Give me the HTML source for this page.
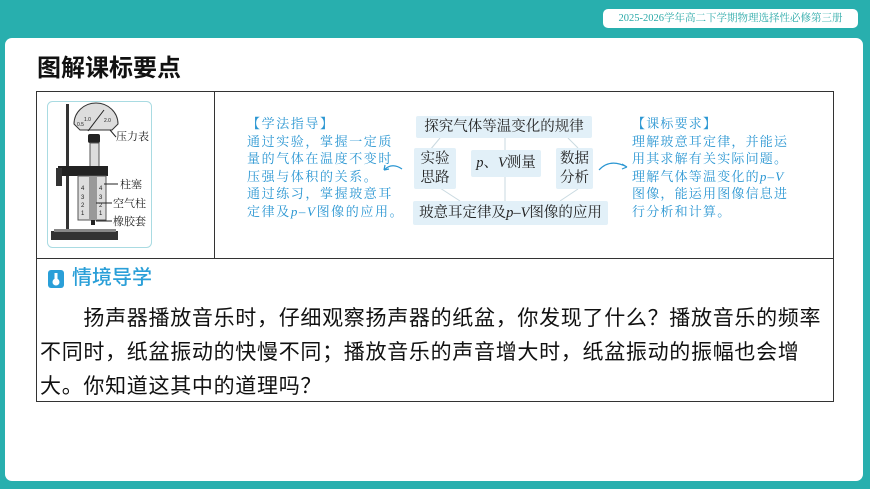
<!DOCTYPE html>
<html><head><meta charset="utf-8"><style>
*{margin:0;padding:0;box-sizing:border-box}
body{width:870px;height:489px;background:#28afae;position:relative;overflow:hidden;font-family:"Liberation Sans","Noto Sans CJK SC",sans-serif}
.badge{position:absolute;left:603px;top:9px;width:255px;height:19px;background:#fff;border-radius:5px;color:#2aa9a8;font-size:10.5px;line-height:19px;text-align:center;font-family:"Liberation Serif","Noto Serif CJK SC",serif}
.card{position:absolute;left:5px;top:38px;width:858px;height:443px;background:#fff;border-radius:7px}
.title{position:absolute;left:37px;top:54px;font-size:24px;font-weight:bold;color:#111;line-height:30px}
.tbl{position:absolute;left:36px;top:91px;width:798px;height:311px;border:1px solid #333}
.vl{position:absolute;left:214px;top:91px;width:1px;height:168px;background:#333}
.hl{position:absolute;left:36px;top:258px;width:798px;height:1px;background:#333}
.blue{position:absolute;color:#2a96d2;font-size:13px;line-height:17.5px;font-family:"Liberation Serif","Noto Serif CJK SC",serif;letter-spacing:1.6px;white-space:nowrap}
.bx{position:absolute;background:#e2f0f8;color:#222;font-family:"Liberation Serif","Noto Serif CJK SC",serif;font-size:14.5px;text-align:center;border-radius:2px;white-space:nowrap}
.sec{position:absolute;left:72px;top:265px;font-size:20px;color:#2a9fd8;line-height:26px;font-weight:500}
.body{position:absolute;left:40px;top:302px;font-size:21px;line-height:34px;color:#111;letter-spacing:0.7px;white-space:nowrap}
</style></head><body>
<div class="badge">2025-2026学年高二下学期物理选择性必修第三册</div>
<div class="card"></div>
<div class="title">图解课标要点</div>
<div class="tbl"></div>
<div class="vl"></div>
<div class="hl"></div>
<svg style="position:absolute;left:0;top:0" width="870" height="489">
<rect x="47.5" y="101.5" width="104" height="146" rx="5" fill="#fff" stroke="#a9dbe2"/>
<rect x="66" y="104" width="3" height="135" fill="#333"/>
<rect x="51" y="231" width="67" height="9" fill="#333"/>
<rect x="54" y="229" width="62" height="3" fill="#888"/>
<path d="M74 124 A22 21 0 0 1 118 124 L112 130 L80 130 Z" fill="#ddd" stroke="#333"/>
<line x1="88" y1="131" x2="104" y2="110" stroke="#222"/>
<text x="84" y="121" font-size="5" fill="#222">1.0</text>
<text x="104" y="122" font-size="5" fill="#222">2.0</text>
<text x="77" y="126" font-size="5" fill="#222">0.5</text>
<line x1="110" y1="130" x2="116" y2="137" stroke="#222"/>
<rect x="88" y="134" width="12" height="9" rx="2" fill="#222"/>
<rect x="90" y="143" width="9" height="24" fill="#ddd" stroke="#555"/>
<rect x="58" y="166" width="50" height="10" fill="#222"/>
<rect x="56" y="168" width="6" height="10" fill="#333"/>
<rect x="56" y="178" width="6" height="8" fill="#333"/>
<rect x="78" y="176" width="28" height="44" fill="#ddd" stroke="#555"/>
<rect x="89" y="176" width="8" height="44" fill="#999"/>
<text x="81" y="190" font-size="6" fill="#222">4</text><text x="81" y="199" font-size="6" fill="#222">3</text><text x="81" y="207" font-size="6" fill="#222">2</text><text x="81" y="215" font-size="6" fill="#222">1</text>
<text x="99" y="190" font-size="6" fill="#222">4</text><text x="99" y="199" font-size="6" fill="#222">3</text><text x="99" y="207" font-size="6" fill="#222">2</text><text x="99" y="215" font-size="6" fill="#222">1</text>
<rect x="91" y="220" width="4" height="5" fill="#222"/>
<line x1="104" y1="184" x2="118" y2="184" stroke="#222"/>
<line x1="96" y1="203" x2="112" y2="203" stroke="#222"/>
<line x1="96" y1="221" x2="112" y2="221" stroke="#222"/>
<g font-family="Liberation Serif,Noto Serif CJK SC,serif" font-size="11" fill="#222">
<text x="116" y="140">压力表</text><text x="120" y="188">柱塞</text><text x="113" y="207">空气柱</text><text x="113" y="225">橡胶套</text></g>
<g stroke="#c9d9e0" fill="none">
<line x1="440" y1="138" x2="430" y2="150"/><line x1="505" y1="138" x2="505" y2="201"/><line x1="568" y1="138" x2="578" y2="148"/>
<line x1="440" y1="188" x2="460" y2="201"/><line x1="578" y1="189" x2="560" y2="201"/></g>
<path d="M402 169 Q392 162 384 170 M384 170 l5 -1 M384 170 l1 -5" stroke="#2a96d2" fill="none" stroke-width="1.2"/>
<path d="M599 170 Q610 158 627 167 M627 167 l-5 -3 M627 167 l-5 2" stroke="#2a96d2" fill="none" stroke-width="1.2"/>
<rect x="48" y="270" width="16" height="18" rx="3" fill="#2a9fd8"/>
<circle cx="56" cy="282" r="3.5" fill="#fff"/><rect x="54.5" y="273" width="3" height="7" fill="#fff"/>
</svg>
<div class="blue" style="left:247px;top:115px">【学法指导】<br>通过实验，掌握一定质<br>量的气体在温度不变时<br>压强与体积的关系。<br>通过练习，掌握玻意耳<br>定律及<i>p</i>–<i>V</i>图像的应用。</div>
<div class="blue" style="left:632px;top:115px;letter-spacing:1.2px">【课标要求】<br>理解玻意耳定律，并能运<br>用其求解有关实际问题。<br>理解气体等温变化的<i>p</i>–<i>V</i><br>图像，能运用图像信息进<br>行分析和计算。</div>
<div class="bx" style="left:416px;top:116px;width:176px;height:22px;line-height:22px">探究气体等温变化的规律</div>
<div class="bx" style="left:414px;top:148px;width:42px;height:41px;line-height:19px;padding-top:2px">实验<br>思路</div>
<div class="bx" style="left:471px;top:150px;width:70px;height:27px;line-height:27px"><i>p</i>、<i>V</i>测量</div>
<div class="bx" style="left:556px;top:148px;width:37px;height:41px;line-height:19px;padding-top:2px">数据<br>分析</div>
<div class="bx" style="left:413px;top:201px;width:195px;height:24px;line-height:24px">玻意耳定律及<i>p</i>–<i>V</i>图像的应用</div>
<div class="sec">情境导学</div>
<div class="body">　　扬声器播放音乐时，仔细观察扬声器的纸盆，你发现了什么？播放音乐的频率<br>不同时，纸盆振动的快慢不同；播放音乐的声音增大时，纸盆振动的振幅也会增<br>大。你知道这其中的道理吗？</div>
</body></html>
